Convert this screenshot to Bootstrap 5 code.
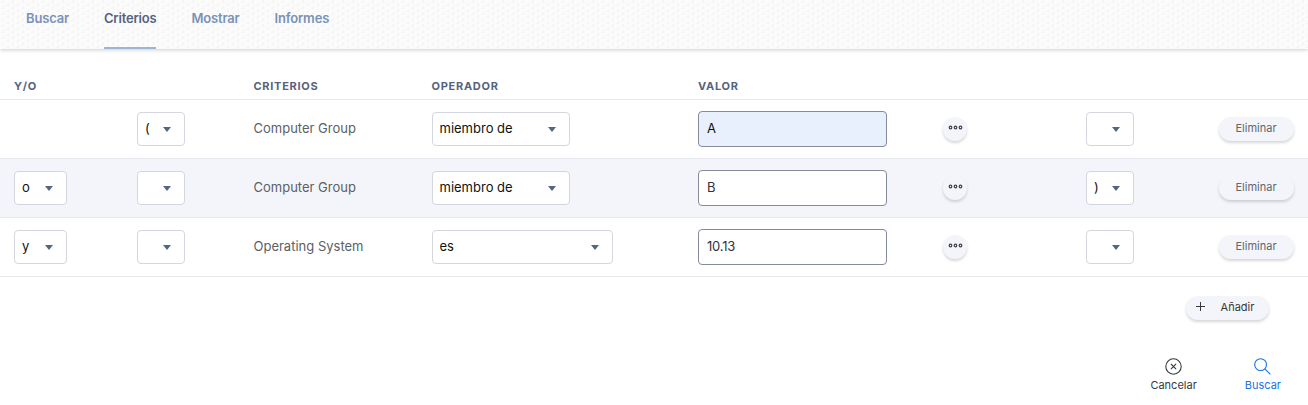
<!DOCTYPE html>
<html lang="es">
<head>
<meta charset="utf-8">
<meta name="viewport" content="width=device-width, initial-scale=1">
<title>Criterios</title>
<link href="https://cdn.jsdelivr.net/npm/bootstrap@5.3.0/dist/css/bootstrap.min.css" rel="stylesheet">
<style>
body{font-family:Inter,"Liberation Sans",sans-serif;font-size:13px;color:#54585f;background:#fff;overflow:hidden}
.tabbar{height:49px;padding-left:26px;gap:35px;background:#fbfbfb url("data:image/svg+xml,%3Csvg xmlns='http://www.w3.org/2000/svg' width='10' height='6'%3E%3Cg fill='%23f4f4f4'%3E%3Ccircle cx='2.5' cy='1.5' r='1.7'/%3E%3Ccircle cx='7.5' cy='4.5' r='1.7'/%3E%3C/g%3E%3Cg fill='%23fdfdfd'%3E%3Ccircle cx='1.7' cy='1' r='1'/%3E%3Ccircle cx='6.7' cy='4' r='1'/%3E%3C/g%3E%3C/svg%3E");box-shadow:0 1px 4px rgba(0,0,0,.2)}
.tabbar .nav-link{height:49px;padding:8px 0 0;line-height:20px;letter-spacing:-.18px;font-weight:600;color:#7a92b8;border-bottom:2px solid transparent;white-space:nowrap}
.tabbar .nav-link.active{color:#56637e;border-color:#9bb5d8}
.criteria{table-layout:fixed;width:1308px;margin-top:24px;margin-bottom:0}
.criteria>:not(caption)>*>*{padding:0 0 0 14px;border-bottom:1px solid #e6e8ed;background:transparent;vertical-align:middle;color:#5b5f66}
.criteria>thead>tr>th{height:26px;padding-top:1px;font-size:11px;font-weight:700;letter-spacing:.72px;color:#56637e;line-height:14px}
.criteria td{height:59px}
.criteria tr.tinted{background:#f4f5fa}
.pick{display:block;height:34px;padding:0 0 2px 7px;border:1px solid #d3d6dd;border-radius:4px;font-size:13px;line-height:30px;color:#111;background:#fff url("data:image/svg+xml,%3Csvg xmlns='http://www.w3.org/2000/svg' width='8' height='5'%3E%3Cpath d='M0 0h8L4 5z' fill='%2356657f'/%3E%3C/svg%3E") no-repeat right 13px top 14px/8px 5px}
.w-join{width:53px}.w-paren{width:48px}.w-op{width:138px}.w-wide{width:181px}
.value-box{width:189px;height:36px;padding:0 8px 2px;border:1px solid #858b98;border-radius:4px;font-size:13px;letter-spacing:-.2px;color:#303238;background:#fff}
.value-box.filled{background:#e8effd;color:#111}
.pill{height:24px;padding:0;border:0;border-radius:12px;background:#f4f5fa;font-size:11px;line-height:22px;color:#62666e;box-shadow:0 2px 3px rgba(0,0,0,.16)}
.pill.remove{width:75px;padding-bottom:1px;line-height:22px}
.pill.more{width:24px;display:flex;align-items:center;justify-content:center;padding-bottom:2px}
.pill.add{width:83px;color:#36383d;gap:16px;padding:0 5px 2px 0}
.add-row{margin-top:19px;padding-right:39px}
.actions{margin-top:38px;padding-right:27px;gap:48px;font-size:11px;line-height:14px;color:#36383d}
.actions svg{margin-bottom:3px}
.go{color:#1673e6}
</style>
</head>
<body>
<nav class="nav tabbar flex-nowrap">
<a class="nav-link" href="#">Buscar</a><a class="nav-link active" href="#">Criterios</a><a class="nav-link" href="#">Mostrar</a><a class="nav-link" href="#">Informes</a>
</nav>
<svg class="d-none"><symbol id="dots" viewBox="0 0 15 5"><g fill="none" stroke="#3f4147" stroke-width="1.2"><circle cx="2.5" cy="2.5" r="1.3"/><circle cx="7.5" cy="2.5" r="1.3"/><circle cx="12.5" cy="2.5" r="1.3"/></g></symbol></svg>
<table class="table criteria">
<colgroup><col style="width:123px"><col style="width:116.5px"><col style="width:178px"><col style="width:266.5px"><col style="width:245px"><col style="width:143px"><col style="width:132.5px"><col></colgroup>
<thead><tr><th>Y/O</th><th></th><th>CRITERIOS</th><th>OPERADOR</th><th>VALOR</th><th></th><th></th><th></th></tr></thead>
<tbody>
<tr>
<td></td>
<td><select class="pick form-select w-paren"><option>(</option></select></td>
<td>Computer Group</td>
<td><select class="pick form-select w-op"><option>miembro de</option></select></td>
<td><input class="form-control value-box filled" value="A"></td>
<td><button class="btn pill more"><svg width="15" height="5"><use href="#dots"/></svg></button></td>
<td><select class="pick form-select w-paren"><option></option></select></td>
<td><button class="btn pill remove">Eliminar</button></td>
</tr>
<tr class="tinted">
<td><select class="pick form-select w-join"><option>o</option></select></td>
<td><select class="pick form-select w-paren"><option></option></select></td>
<td>Computer Group</td>
<td><select class="pick form-select w-op"><option>miembro de</option></select></td>
<td><input class="form-control value-box" value="B"></td>
<td><button class="btn pill more"><svg width="15" height="5"><use href="#dots"/></svg></button></td>
<td><select class="pick form-select w-paren"><option>)</option></select></td>
<td><button class="btn pill remove">Eliminar</button></td>
</tr>
<tr>
<td><select class="pick form-select w-join"><option>y</option></select></td>
<td><select class="pick form-select w-paren"><option></option></select></td>
<td>Operating System</td>
<td><select class="pick form-select w-wide"><option>es</option></select></td>
<td><input class="form-control value-box" value="10.13"></td>
<td><button class="btn pill more"><svg width="15" height="5"><use href="#dots"/></svg></button></td>
<td><select class="pick form-select w-paren"><option></option></select></td>
<td><button class="btn pill remove">Eliminar</button></td>
</tr>
</tbody>
</table>
<div class="d-flex justify-content-end add-row">
<button class="btn pill add d-flex align-items-center justify-content-center"><svg width="9" height="9" viewBox="0 0 9 9" stroke="#36383d"><path d="M4.5 0v9M0 4.5h9"/></svg><span>Añadir</span></button>
</div>
<div class="d-flex justify-content-end actions">
<div class="d-flex flex-column align-items-center"><svg width="17" height="17" viewBox="0 0 17 17" fill="none" stroke="#36383d" stroke-width="1.1"><circle cx="8.5" cy="8.5" r="7.7"/><path d="M5.9 5.9l5.2 5.2M11.1 5.9l-5.2 5.2"/></svg><span>Cancelar</span></div>
<div class="d-flex flex-column align-items-center go"><svg width="17" height="17" viewBox="0 0 17 17" fill="none" stroke="#1673e6" stroke-width="1.1"><circle cx="6.6" cy="6.6" r="5.9"/><path d="M10.8 10.8l5.6 5.6"/></svg><span>Buscar</span></div>
</div>
<script src="https://cdn.jsdelivr.net/npm/bootstrap@5.3.0/dist/js/bootstrap.bundle.min.js"></script>
</body>
</html>
